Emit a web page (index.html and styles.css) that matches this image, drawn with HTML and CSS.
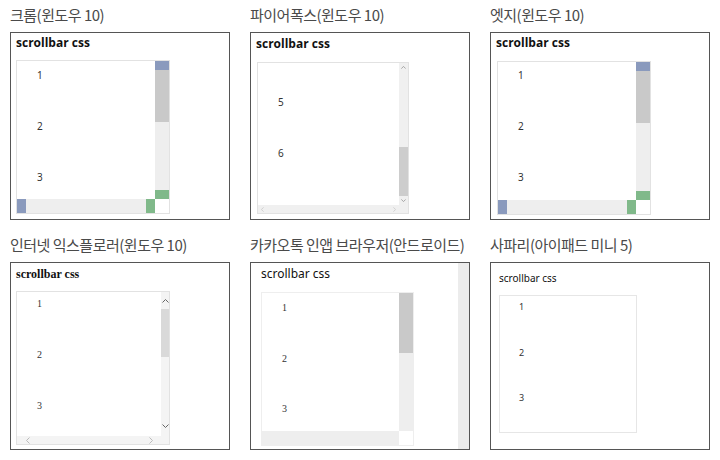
FILE: index.html
```html
<!DOCTYPE html>
<html>
  <head>
    <meta charset="utf-8">
    <title>scrollbar css 브라우저별 비교</title>
    <link rel="stylesheet" href="styles.css">
  </head>
  <body>
    <div class="page">

      <section class="shot">
        <h2 class="shot-title">크롬(윈도우 10)</h2>
        <div class="frame frame-chrome">
          <div class="frame-body">
            <h3 class="demo-title">scrollbar css</h3>
            <div class="scroller skin-color">
              <div class="viewport">
                <ul class="items">
                  <li>1</li><li>2</li><li>3</li>
                </ul>
              </div>
              <div class="vbar">
                <span class="btn btn-start"></span>
                <span class="thumb"></span>
                <span class="track"></span>
                <span class="btn btn-end"></span>
              </div>
              <div class="hbar">
                <span class="btn btn-start"></span>
                <span class="track"></span>
                <span class="btn btn-end"></span>
              </div>
              <div class="corner"></div>
            </div>
          </div>
        </div>
      </section>

      <section class="shot">
        <h2 class="shot-title">파이어폭스(윈도우 10)</h2>
        <div class="frame frame-firefox">
          <div class="frame-body">
            <h3 class="demo-title">scrollbar css</h3>
            <div class="scroller skin-firefox">
              <div class="viewport">
                <ul class="items">
                  <li>5</li><li>6</li>
                </ul>
              </div>
              <div class="vbar">
                <span class="btn"><svg width="5" height="3" viewBox="0 0 7 4"><path d="M0.5 3.5 3.5 0.5 6.5 3.5"/></svg></span>
                <span class="track"></span>
                <span class="thumb"></span>
                <span class="btn"><svg width="5" height="3" viewBox="0 0 7 4"><path d="M0.5 0.5 3.5 3.5 6.5 0.5"/></svg></span>
              </div>
              <div class="hbar">
                <span class="btn"><svg width="3" height="5" viewBox="0 0 4 7"><path d="M3.5 0.5 0.5 3.5 3.5 6.5"/></svg></span>
                <span class="track"></span>
                <span class="btn"><svg width="3" height="5" viewBox="0 0 4 7"><path d="M0.5 0.5 3.5 3.5 0.5 6.5"/></svg></span>
              </div>
              <div class="corner"></div>
            </div>
          </div>
        </div>
      </section>

      <section class="shot">
        <h2 class="shot-title">엣지(윈도우 10)</h2>
        <div class="frame frame-edge">
          <div class="frame-body">
            <h3 class="demo-title">scrollbar css</h3>
            <div class="scroller skin-color">
              <div class="viewport">
                <ul class="items">
                  <li>1</li><li>2</li><li>3</li>
                </ul>
              </div>
              <div class="vbar">
                <span class="btn btn-start"></span>
                <span class="thumb"></span>
                <span class="track"></span>
                <span class="btn btn-end"></span>
              </div>
              <div class="hbar">
                <span class="btn btn-start"></span>
                <span class="track"></span>
                <span class="btn btn-end"></span>
              </div>
              <div class="corner"></div>
            </div>
          </div>
        </div>
      </section>

      <section class="shot">
        <h2 class="shot-title">인터넷 익스플로러(윈도우 10)</h2>
        <div class="frame frame-ie">
          <div class="frame-body">
            <h3 class="demo-title">scrollbar css</h3>
            <div class="scroller skin-ie">
              <div class="viewport">
                <ul class="items">
                  <li>1</li><li>2</li><li>3</li>
                </ul>
              </div>
              <div class="vbar">
                <span class="btn btn-start"><svg width="7" height="4" viewBox="0 0 7 4"><path d="M0.5 3.5 3.5 0.5 6.5 3.5"/></svg></span>
                <span class="thumb"></span>
                <span class="track"></span>
                <span class="btn btn-end"><svg width="7" height="4" viewBox="0 0 7 4"><path d="M0.5 0.5 3.5 3.5 6.5 0.5"/></svg></span>
              </div>
              <div class="hbar">
                <span class="btn btn-start"><svg width="4" height="7" viewBox="0 0 4 7"><path d="M3.5 0.5 0.5 3.5 3.5 6.5"/></svg></span>
                <span class="track"></span>
                <span class="btn btn-end"><svg width="4" height="7" viewBox="0 0 4 7"><path d="M0.5 0.5 3.5 3.5 0.5 6.5"/></svg></span>
              </div>
              <div class="corner"></div>
            </div>
          </div>
        </div>
      </section>

      <section class="shot">
        <h2 class="shot-title">카카오톡 인앱 브라우저(안드로이드)</h2>
        <div class="frame frame-kakao">
          <div class="frame-body">
            <h3 class="demo-title">scrollbar css</h3>
            <div class="scroller skin-kakao">
              <div class="viewport">
                <ul class="items">
                  <li>1</li><li>2</li><li>3</li>
                </ul>
              </div>
              <div class="vbar">
                <span class="thumb"></span>
                <span class="track"></span>
              </div>
              <div class="hbar">
                <span class="track"></span>
              </div>
              <div class="corner"></div>
            </div>
          </div>
          <div class="page-bar"></div>
        </div>
      </section>

      <section class="shot">
        <h2 class="shot-title">사파리(아이패드 미니 5)</h2>
        <div class="frame frame-safari">
          <div class="frame-body">
            <h3 class="demo-title">scrollbar css</h3>
            <div class="scroller skin-plain">
              <div class="viewport">
                <ul class="items">
                  <li>1</li><li>2</li><li>3</li>
                </ul>
              </div>
            </div>
          </div>
        </div>
      </section>

    </div>
  </body>
</html>
```

FILE: styles.css
```css
body {
  margin: 0;
  padding: 0;
  background: #fff;
  font-family: "Noto Sans CJK KR", "Noto Sans", sans-serif;
}

.page {
  display: grid;
  grid-template-columns: repeat(3, 220px);
  column-gap: 20px;
  row-gap: 10px;
  padding-left: 10px;
}

.shot-title {
  margin: 0;
  height: 32px;
  padding-top: 5px;
  box-sizing: border-box;
  font-size: 15px;
  line-height: 20px;
  letter-spacing: -0.5px;
  font-weight: normal;
  color: #4a4a4a;
  white-space: nowrap;
}

.frame {
  display: flex;
  width: 220px;
  height: 188px;
  box-sizing: border-box;
  border: 1px solid #555;
}
.frame-body {
  flex: 1;
  padding: 2px 0 0 5px;
}
.page-bar {
  width: 11px;
  background: #ececec;
}

.demo-title {
  margin: 0 0 9px;
  font-family: "Open Sans", sans-serif;
  font-size: 12px;
  line-height: 16px;
  font-weight: bold;
  color: #111;
}

/* fake scroll box: content + vertical bar / horizontal bar + corner */
.scroller {
  --vbar: 14px;
  --hbar: 14px;
  display: grid;
  grid-template-columns: minmax(0, 1fr) var(--vbar);
  grid-template-rows: minmax(0, 1fr) var(--hbar);
  width: 154px;
  height: 154px;
  box-sizing: border-box;
  border: 1px solid #e2e2e2;
}
.viewport {
  overflow: hidden;
  min-height: 0;
}
.items {
  list-style: none;
  margin: 0;
  padding: 4px 0 0 20px;
  font-family: "Noto Sans", sans-serif;
  font-size: 10px;
  color: #333;
}
.items li {
  height: 51px;
  line-height: 20px;
}
.vbar {
  display: flex;
  flex-direction: column;
}
.hbar {
  display: flex;
}
.track {
  flex: 1;
  background: #eee;
}
.thumb {
  background: #c9c9c9;
}
.btn {
  display: flex;
  align-items: center;
  justify-content: center;
}
.btn svg path {
  fill: none;
  stroke: #888;
  stroke-width: 1;
}
.corner {
  background: #fff;
}

/* chrome / edge : custom colored scrollbar */
.skin-color .vbar .btn {
  height: 9px;
}
.skin-color .hbar .btn {
  width: 9px;
}
.skin-color .btn-start {
  background: #8a9abd;
}
.skin-color .btn-end {
  background: #80b98a;
}
.skin-color .vbar .thumb {
  height: 52px;
}

/* firefox */
.skin-firefox {
  --vbar: 9px;
  --hbar: 8px;
  width: 152px;
  height: 152px;
  margin-left: 1px;
}
.skin-firefox .vbar,
.skin-firefox .hbar,
.skin-firefox .corner {
  background: #f0f0f0;
}
.skin-firefox .track {
  background: transparent;
}
.skin-firefox .vbar .btn {
  height: 9px;
}
.skin-firefox .hbar .btn {
  width: 9px;
}
.skin-firefox .thumb {
  height: 49px;
  background: #cdcdcd;
}
.skin-firefox .hbar svg path {
  stroke: #c4c4c4;
}
.skin-firefox .items {
  padding-top: 29px;
}

/* internet explorer */
.skin-ie {
  --vbar: 8px;
  --hbar: 8px;
}
.skin-ie .vbar,
.skin-ie .hbar,
.skin-ie .corner {
  background: #f4f4f4;
}
.skin-ie .track {
  background: transparent;
}
.skin-ie .vbar .btn-start {
  height: 17px;
}
.skin-ie .vbar .btn-end {
  height: 20px;
}
.skin-ie .hbar .btn-start {
  width: 22px;
}
.skin-ie .hbar .btn-end {
  width: 20px;
}
.skin-ie .thumb {
  height: 48px;
  background: #d9d9d9;
}
.skin-ie .vbar svg path {
  stroke: #666;
}
.skin-ie .hbar svg path {
  stroke: #bbb;
}
.skin-ie .items {
  padding-top: 2px;
  font-family: "Liberation Serif", "DejaVu Serif", serif;
}

/* kakao in-app */
.skin-kakao {
  width: 153px;
  border-color: #eee;
}
.skin-kakao .thumb {
  height: 60px;
}
.skin-kakao .items {
  padding-top: 5px;
  font-family: "Liberation Serif", "DejaVu Serif", serif;
}
.skin-kakao .items li {
  height: 50.5px;
}

/* safari: no scrollbar */
.skin-plain {
  grid-template-columns: minmax(0, 1fr);
  grid-template-rows: minmax(0, 1fr);
  width: 138px;
  height: 138px;
  border-color: #e6e6e6;
}
.skin-plain .items {
  padding: 1px 0 0 19px;
  font-size: 9px;
}
.skin-plain .items li {
  height: 45.5px;
}

/* frame tweaks per browser */
.frame-firefox .frame-body {
  padding-top: 3px;
}
.frame-firefox .demo-title {
  margin-bottom: 10px;
}
.frame-edge .demo-title {
  margin-bottom: 10px;
}
.frame-edge .scroller {
  margin-left: 1px;
}
.frame-edge .items {
  padding-top: 3px;
}
.frame-ie .frame-body {
  padding-top: 3px;
}
.frame-ie .demo-title {
  font-family: "Liberation Serif", "DejaVu Serif", serif;
  font-size: 12px;
}
.frame-kakao .frame-body {
  padding: 3px 0 0 10px;
}
.frame-kakao .demo-title {
  margin-bottom: 10px;
  font-family: "Noto Sans", sans-serif;
  font-size: 12px;
  font-weight: normal;
}
.frame-safari .frame-body {
  padding: 7px 0 0 8px;
}
.frame-safari .demo-title {
  font-family: "Noto Sans", sans-serif;
  font-size: 10px;
  font-weight: normal;
}
```
